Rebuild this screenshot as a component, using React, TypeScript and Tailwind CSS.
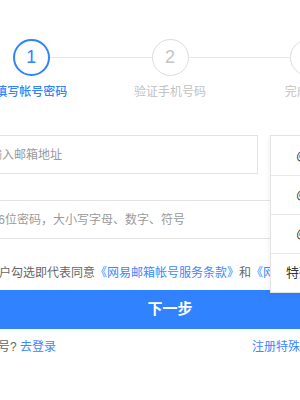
const FONT = "font-['Liberation_Sans','Noto_Sans_CJK_SC',sans-serif]";

const STEPS = [
  { n: 1, label: "填写帐号密码", active: true },
  { n: 2, label: "验证手机号码", active: false },
  { n: 3, label: "完成注册", active: false },
];

const SUFFIXES = ["@163.com", "@126.com", "@yeah.net"];

export default function App() {
  return (
    <div className={`h-[400px] w-[300px] overflow-hidden bg-white ${FONT}`}>
      <div className="relative ml-[-38px] w-[416px] pt-[39px]">
        {/* Steps */}
        <div className="grid grid-cols-3">
          {STEPS.map((s, i) => (
            <div key={s.n} className="flex flex-col items-center">
              <div className="flex w-full items-center">
                <div className={`h-px flex-1 ${i === 0 ? "bg-transparent" : "bg-[#e8e8e8]"}`} />
                <div
                  className={
                    s.active
                      ? "flex h-[37px] w-[37px] items-center justify-center rounded-full border-2 border-[#3182ff] text-[18px] text-[#3182ff]"
                      : "flex h-[37px] w-[37px] items-center justify-center rounded-full border-[1.5px] border-[#dcdcdc] text-[18px] text-[#c4c4c4]"
                  }
                >
                  {s.n}
                </div>
                <div className={`h-px flex-1 ${i === 2 ? "bg-transparent" : "bg-[#e8e8e8]"}`} />
              </div>
              <div
                className={`mt-[8px] text-[12px] leading-[17px] ${
                  s.active ? "font-medium text-[#3182ff]" : "text-[#c2c2c2]"
                }`}
              >
                {s.label}
              </div>
            </div>
          ))}
        </div>

        {/* Email */}
        <div className="mt-[34px] flex gap-[12px]">
          <input
            readOnly
            placeholder="请输入邮箱地址"
            className="h-[39px] w-[296px] border border-[#e3e3e3] pl-[15px] text-[12px] outline-none placeholder:text-[#9a9a9a]"
          />
          <div className="h-[39px] flex-1 border border-[#e3e3e3]" />
        </div>

        {/* Password */}
        <input
          readOnly
          placeholder="6~16位密码，大小写字母、数字、符号"
          className="mt-[26px] block h-[39px] w-full border border-[#e3e3e3] pl-[15px] text-[12px] outline-none placeholder:text-[#9a9a9a]"
        />

        {/* Agreement */}
        <div className="mt-[26px] flex items-center text-[12px] leading-[17px] text-[#666]">
          <span className="mr-[11px] h-[14px] w-[14px] border border-[#ccc]" />
          <span>
            用户勾选即代表同意
            <span className="text-[#3c87ff]">《网易邮箱帐号服务条款》</span>和
            <span className="text-[#3c87ff]">《网易隐私政策》</span>
          </span>
        </div>

        {/* Submit */}
        <button className="mt-[8px] flex h-[39px] w-full items-center justify-center bg-[#3182ff] text-[15px] font-bold text-white">
          下一步
        </button>

        {/* Footer links */}
        <div className="mt-[10px] flex justify-between pr-[54px] text-[12px] leading-[17px]">
          <span className="text-[#666]">
            已有帐号? <span className="text-[#3c87ff]">去登录</span>
          </span>
          <span className="text-[#3c87ff]">注册特殊帐号</span>
        </div>

        {/* Suffix dropdown */}
        <div className="absolute left-[308px] top-[135px] z-10 w-[108px] border border-[#e3e3e3] bg-white text-[13px] text-[#333] shadow-[0_2px_6px_rgba(0,0,0,0.08)]">
          {SUFFIXES.map((s, i) => (
            <div
              key={s}
              className={`flex h-[39px] items-center pl-[25px] ${i > 0 ? "border-t border-[#e8e8e8]" : ""}`}
            >
              {s}
            </div>
          ))}
          <div className="flex h-[39px] items-center border-t border-[#e8e8e8] pl-[15px]">特殊帐号</div>
        </div>
      </div>
    </div>
  );
}
